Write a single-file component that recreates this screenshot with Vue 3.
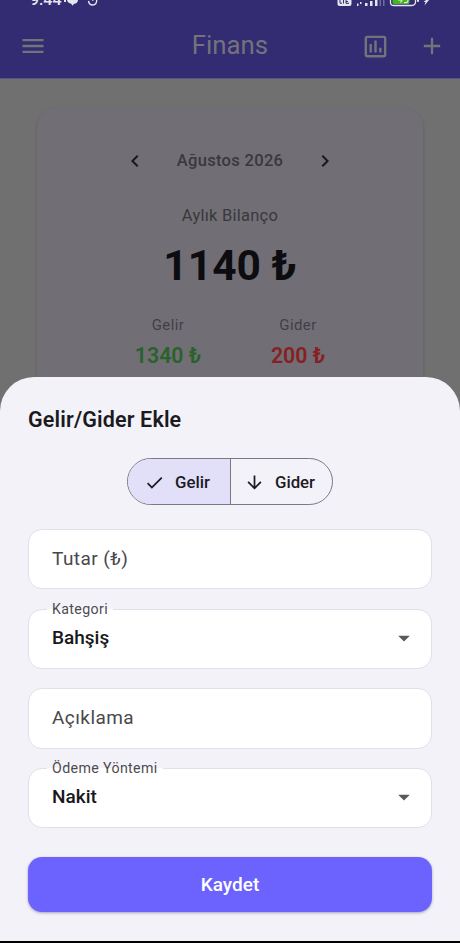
<script setup>
import { ref } from 'vue'

const month = ref('Ağustos 2026')
const totals = [
  { label: 'Gelir', value: '1340 ₺', kind: 'income' },
  { label: 'Gider', value: '200 ₺', kind: 'expense' },
]
const fields = [
  { label: 'Tutar (₺)' },
  { label: 'Kategori', value: 'Bahşiş' },
  { label: 'Açıklama' },
  { label: 'Ödeme Yöntemi', value: 'Nakit' },
]
</script>

<template>
  <div class="screen">
    <header class="top">
      <div class="status">
        <span class="clock">9:44</span>
        <svg class="status-left" width="42" height="8" viewBox="0 0 42 8">
          <path d="M3 0h11c0 2.500-2.200 4-4 3.800L8.500 5.800 7.200 3.800C5 3.500 3.400 2 3 0z" fill="#e6e6f0" />
          <path d="M0 0h2v2H0z" fill="#e6e6f0" />
          <path d="M24.500 0.800c.3 2.600 2 4.200 4.200 4.200 2.400 0 4-1.800 4-5M28 0h1.500" fill="none" stroke="#e6e6f0" stroke-width="1.400" />
        </svg>
        <svg class="status-right" width="96" height="8" viewBox="0 0 96 8">
          <path d="M.5 0h14v4q0 2-2 2h-10q-2 0-2-2z" fill="#e6e6f0" />
          <path d="M3 0v3.200h2M6.500 3.500V0M9 0v3.300h3M9 1.500h2" fill="none" stroke="#332c73" stroke-width="1" />
          <path d="M20 3.500h1.500V6H20zM23 2h1.500v2H23zM28 3h2.500v3H28zM33 1h2.500v5H33zM38 0h2.500v6H38z" fill="#e6e6f0" />
          <path d="M42.500 0h1.500v6h-1.500zM46 0h1.500v6H46z" fill="#716c98" />
          <path d="M53.500 0v2.500Q53.500 5.500 57 5.500h17Q78.500 5.500 78.500 2V0" fill="#332c73" stroke="#e6e6f0" stroke-width="1.300" />
          <path d="M55.500 0h17v2.500q0 1.500-2 1.500H57.500q-2 0-2-1.500z" fill="#46b522" />
          <path d="M61 0h4l-1.500 2.500M67 2.500q4 1 4-2.500" fill="none" stroke="#e6e6f0" stroke-width="1.200" />
          <path d="M80 0h2v1.800h-2zM89 0h3l-4.500 5.500 1-3.500h-2z" fill="#e6e6f0" />
        </svg>
      </div>
      <div class="bar">
        <svg class="menu" width="28" height="28" viewBox="0 0 24 24"><path d="M3 18h18v-2H3v2zm0-5h18v-2H3v2zm0-7v2h18V6H3z" /></svg>
        <h1>Finans</h1>
        <div class="actions">
          <svg width="29" height="29" viewBox="0 0 24 24"><path d="M9 17H7v-7h2v7zm4 0h-2V7h2v10zm4 0h-2v-4h2v4zm2 2H5V5h14v14zm0-16H5c-1.100 0-2 .9-2 2v14c0 1.100.9 2 2 2h14c1.100 0 2-.9 2-2V5c0-1.100-.9-2-2-2z" /></svg>
          <svg width="28" height="28" viewBox="0 0 24 24"><path d="M19 13h-6v6h-2v-6H5v-2h6V5h2v6h6v2z" /></svg>
        </div>
      </div>
    </header>

    <main class="card">
      <div class="month">
        <svg width="24" height="24" viewBox="0 0 24 24"><path d="M15.410 7.410L14 6l-6 6 6 6 1.410-1.410L10.830 12z" /></svg>
        <span>{{ month }}</span>
        <svg width="24" height="24" viewBox="0 0 24 24"><path d="M10 6L8.590 7.410 13.170 12l-4.580 4.590L10 18l6-6z" /></svg>
      </div>
      <div class="balance-label">Aylık Bilanço</div>
      <div class="balance">1140 ₺</div>
      <div class="totals">
        <div v-for="t in totals" :key="t.label" class="total">
          <span class="total-label">{{ t.label }}</span>
          <span class="total-value" :class="t.kind">{{ t.value }}</span>
        </div>
      </div>
    </main>

    <section class="sheet">
      <h2>Gelir/Gider Ekle</h2>
      <div class="segments">
        <button class="segment selected">
          <svg width="21" height="21" viewBox="0 0 24 24"><path d="M9 16.170L4.830 12l-1.420 1.410L9 19 21 7l-1.410-1.410z" /></svg>
          <span>Gelir</span>
        </button>
        <button class="segment">
          <svg width="21" height="21" viewBox="0 0 24 24"><path d="M20 12l-1.410-1.410L13 16.170V4h-2v12.170l-5.580-5.590L4 12l8 8 8-8z" /></svg>
          <span>Gider</span>
        </button>
      </div>
      <div class="fields">
        <div v-for="f in fields" :key="f.label" class="field">
          <template v-if="f.value">
            <span class="floating">{{ f.label }}</span>
            <span class="value">{{ f.value }}</span>
            <svg width="28" height="28" viewBox="0 0 24 24"><path d="M7 10l5 5 5-5z" /></svg>
          </template>
          <span v-else class="placeholder">{{ f.label }}</span>
        </div>
      </div>
      <button class="save">Kaydet</button>
    </section>
    <div class="nav-edge"></div>
  </div>
</template>

<style>
body {
  margin: 0;
  background: #6f706f;
}
</style>

<style scoped>
.screen {
  box-sizing: border-box;
  width: 460px;
  height: 943px;
  overflow: hidden;
  display: flex;
  flex-direction: column;
  background: #6f706f;
  font-family: Roboto, "Noto Sans", sans-serif;
}
svg {
  display: block;
  flex: none;
}
h1, h2 {
  margin: 0;
}
button {
  font: inherit;
  border: 0;
  padding: 0;
}
.top {
  flex: none;
  height: 79px;
  box-sizing: border-box;
  background: #332c73;
  border-bottom: 1px solid #5a5681;
}
.status {
  display: flex;
  height: 14px;
  overflow: hidden;
  padding: 0 28px 0 30px;
}
.clock {
  width: 34px;
  margin-top: -9px;
  font-size: 16px;
  line-height: 18px;
  font-weight: 500;
  color: #e6e6f0;
}
.status-right {
  margin-left: auto;
  margin-right: -1px;
}
.bar {
  display: grid;
  grid-template-columns: 1fr auto 1fr;
  align-items: center;
  height: 64px;
  padding: 0 14px 0 19px;
}
.bar svg {
  fill: #74727a;
}
.bar h1 {
  font-size: 25.800px;
  line-height: 30px;
  font-weight: 400;
  color: #74727a;
  margin: 0 0 2px -5px;
}
.actions {
  display: flex;
  justify-content: flex-end;
  gap: 28px;
}
.card {
  flex: none;
  box-sizing: border-box;
  height: 320px;
  margin: 29px 37px -51px;
  padding-top: 40px;
  border-radius: 19px;
  background: #716f75;
  box-shadow: 0 2px 3px rgba(40, 40, 50, 0.3);
  display: flex;
  flex-direction: column;
  align-items: center;
}
.month {
  display: flex;
  align-items: center;
  justify-content: space-between;
  width: 215px;
  height: 26px;
  color: #39383c;
  font-size: 16.500px;
  font-weight: 500;
  letter-spacing: 0.320px;
}
.month svg {
  fill: #19181c;
}
.month span {
  margin-top: -1px;
}
.balance-label {
  margin-top: 31px;
  line-height: 21px;
  font-size: 16.500px;
  letter-spacing: 0.240px;
  color: #39383c;
}
.balance {
  margin-top: 15px;
  line-height: 50px;
  font-size: 42.500px;
  font-weight: 700;
  color: #0d0c10;
}
.totals {
  display: grid;
  grid-template-columns: 130px 130px;
  margin-top: 24px;
  padding-left: 6px;
}
.total {
  display: flex;
  flex-direction: column;
  align-items: center;
}
.total-label {
  font-size: 15px;
  line-height: 20px;
  letter-spacing: 0.400px;
  color: #414045;
}
.total-value {
  margin-top: 9px;
  font-size: 21.300px;
  line-height: 24px;
  font-weight: 600;
}
.income {
  color: #29622c;
}
.expense {
  color: #862022;
}
.sheet {
  position: relative;
  flex: none;
  box-sizing: border-box;
  height: 564px;
  padding: 30px 28px 0;
  border-radius: 34px 34px 0 0;
  background: #f4f2f9;
  display: flex;
  flex-direction: column;
}
.sheet h2 {
  font-size: 21.500px;
  line-height: 26px;
  font-weight: 600;
  letter-spacing: 0.150px;
  color: #1b1a20;
}
.segments {
  align-self: center;
  box-sizing: border-box;
  display: flex;
  width: 206px;
  height: 47px;
  margin-top: 25px;
  overflow: hidden;
  border: 1px solid #7b7883;
  border-radius: 24px;
}
.segment {
  box-sizing: border-box;
  flex: none;
  width: 102px;
  display: flex;
  align-items: center;
  justify-content: center;
  gap: 10px;
  padding: 1px 4px 0 0;
  background: transparent;
  color: #1c1a24;
  font-size: 16.800px;
  font-weight: 500;
}
.segment + .segment {
  border-left: 1px solid #7b7883;
}
.segment.selected {
  background: #e2dff9;
}
.segment svg {
  fill: #1c1a24;
}
.fields {
  display: flex;
  flex-direction: column;
  gap: 19.200px;
  margin-top: 24px;
}
.field {
  position: relative;
  box-sizing: border-box;
  height: 60.400px;
  display: flex;
  align-items: center;
  padding: 0 13px 2px 23px;
  background: #fff;
  border: 1px solid #e1e0e6;
  border-radius: 14px;
}
.placeholder {
  font-size: 19px;
  letter-spacing: 0.430px;
  color: #49474d;
}
.value {
  font-size: 19px;
  font-weight: 500;
  color: #18171b;
}
.field svg {
  margin-left: auto;
  margin-top: 1px;
  fill: #59585b;
}
.floating {
  position: absolute;
  left: 18px;
  top: -10px;
  padding: 0 5px;
  font-size: 14.200px;
  line-height: 18px;
  letter-spacing: 0.370px;
  color: #4d4b51;
  background: linear-gradient(#f4f2f9 9px, #fff 9px);
}
.save {
  flex: none;
  height: 55px;
  margin-top: 29px;
  border-radius: 14px;
  background: #6c63ff;
  color: #fff;
  font-size: 19px;
  font-weight: 500;
  box-shadow: 0 1px 3px rgba(50, 45, 90, 0.4);
}
.nav-edge {
  flex: none;
  height: 2px;
  background: #000;
}
</style>
